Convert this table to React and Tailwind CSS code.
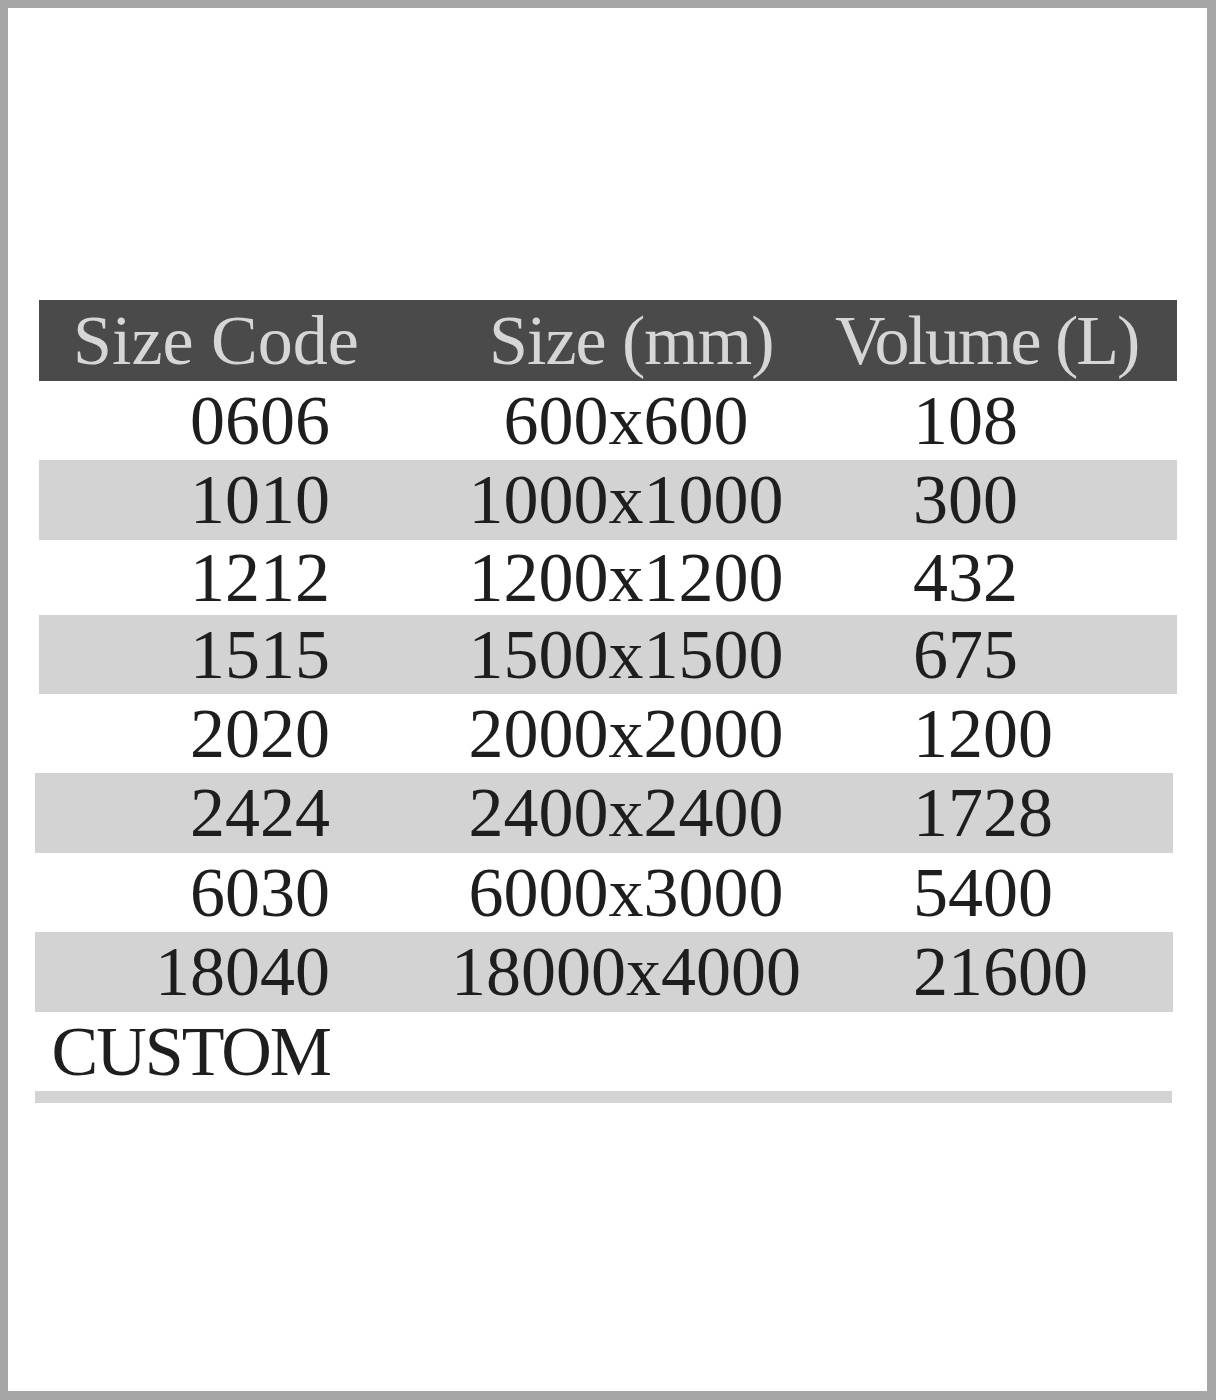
import React from "react";

const rows = [
  { code: "0606", size: "600x600", vol: "108", h: "h-[79px]", bg: "" },
  { code: "1010", size: "1000x1000", vol: "300", h: "h-[80px]", bg: "bg-[#d3d3d3]" },
  { code: "1212", size: "1200x1200", vol: "432", h: "h-[75px]", bg: "" },
  { code: "1515", size: "1500x1500", vol: "675", h: "h-[79px]", bg: "bg-[#d3d3d3]" },
  { code: "2020", size: "2000x2000", vol: "1200", h: "h-[79px]", bg: "" },
  { code: "2424", size: "2400x2400", vol: "1728", h: "h-[80px]", bg: "bg-[#d3d3d3]", shift: true },
  { code: "6030", size: "6000x3000", vol: "5400", h: "h-[79px]", bg: "" },
  { code: "18040", size: "18000x4000", vol: "21600", h: "h-[80px]", bg: "bg-[#d3d3d3]", shift: true },
  { code: "CUSTOM", size: "", vol: "", h: "h-[79px]", bg: "", custom: true },
];

export default function App() {
  return (
    <div
      className="w-[1216px] h-[1400px] bg-white border-l-[8px] border-t-[8px] border-r-[9px] border-b-[9px] border-[#a6a6a6] pt-[292px] pl-[31px]"
      style={{ fontFamily: '"Liberation Serif", "Times New Roman", serif' }}
    >
      <div className="w-[1138px]">
        <div className="grid grid-cols-[450px_346px_1fr] h-[81px] leading-[81px] bg-[#4a4a4a] text-[#d6d6d6] text-[70px] whitespace-nowrap">
          <div className="pl-[34px]">Size Code</div>
          <div className="tracking-[-1px]">Size (mm)</div>
          <div className="tracking-[-2px]">Volume (L)</div>
        </div>
        {rows.map((r) => (
          <div
            key={r.code}
            className={`grid ${r.h} ${r.bg} w-[1138px] ${
              r.shift ? "-ml-[4px] grid-cols-[304px_574px_1fr]" : "grid-cols-[300px_574px_1fr]"
            } items-center text-[70px] leading-none text-[#1e1e1e] whitespace-nowrap`}
          >
            <div className={`text-right pr-[9px] ${r.custom ? "tracking-[-2px]" : ""}`}>{r.code}</div>
            <div className="text-center">{r.size}</div>
            <div className="text-left">{r.vol}</div>
          </div>
        ))}
        <div className="-ml-[4px] w-[1137px] h-[12px] bg-[#d3d3d3]" />
      </div>
    </div>
  );
}
